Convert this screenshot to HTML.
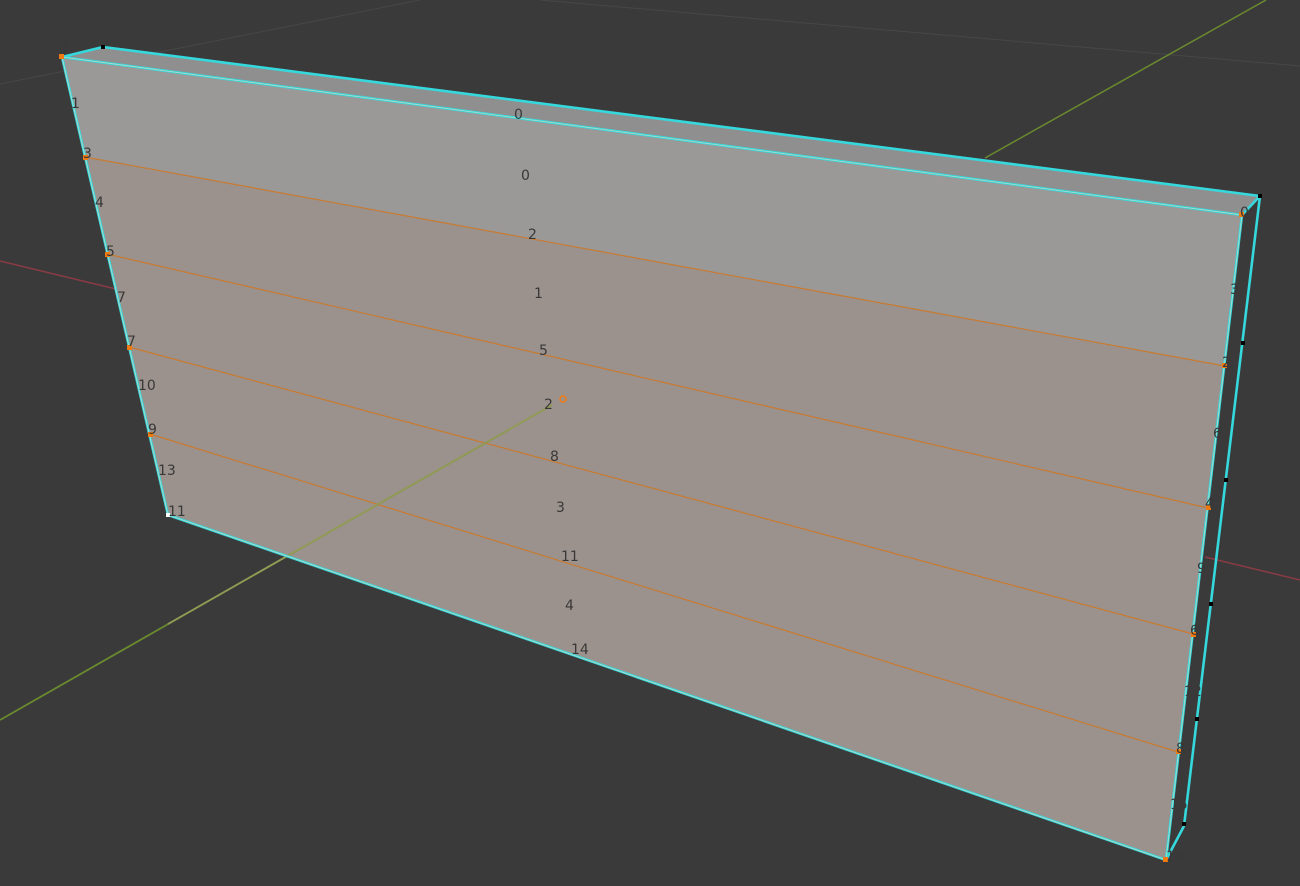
<!DOCTYPE html>
<html><head><meta charset="utf-8"><style>
html,body{margin:0;padding:0;background:#3a3a3a;overflow:hidden}
svg{display:block}
text{font-family:"DejaVu Sans","Liberation Sans",sans-serif;font-size:14px;fill:#383838}
</style></head><body>
<svg width="1300" height="886" viewBox="0 0 1300 886" xmlns="http://www.w3.org/2000/svg">
<rect width="1300" height="886" fill="#3a3a3a"/>
<line x1="0" y1="84" x2="420" y2="0" stroke="#474747" stroke-width="1"/>
<line x1="540" y1="0" x2="1300" y2="66" stroke="#474747" stroke-width="1"/>
<line x1="0" y1="261" x2="120" y2="290" stroke="#8a3a44" stroke-width="1.5"/>
<line x1="1205" y1="557" x2="1300" y2="580" stroke="#8a3a44" stroke-width="1.5"/>
<line x1="985" y1="158" x2="1266" y2="0" stroke="#6a8a2e" stroke-width="1.5"/>
<polygon points="62,57 103,47 1260,196 1242,215" fill="#8f8f8f"/>
<polygon points="62,57 1242,215 1166,860 168,515" fill="#9c928d"/>
<polygon points="62,57 1242,215 1225,366 85,157" fill="#9b9997"/>
<g stroke="#c87a30" stroke-width="1.2">
<line x1="85" y1="157" x2="1225" y2="366"/>
<line x1="107" y1="254" x2="1208" y2="508"/>
<line x1="129" y1="347" x2="1193" y2="634"/>
<line x1="150" y1="434" x2="1178" y2="752"/>
</g>
<line x1="0" y1="720" x2="552" y2="405" stroke="#6a8a2e" stroke-width="1.8"/>
<line x1="552" y1="405" x2="168" y2="624" stroke="#9ea060" stroke-width="1.8" opacity="0.8"/>
<g fill="none" stroke="#35d8dc" stroke-width="2.6" stroke-linejoin="round">
<polygon points="62,57 1242,215 1166,860 168,515"/>
<polyline points="62,57 103,47 1260,196 1242,215"/>
<polyline points="1260,196 1184,826 1166,860"/>
</g>
<g fill="none" stroke="#b8d8c8" stroke-width="0.8">
<polygon points="62,57 1242,215 1166,860 168,515"/>
</g>
<g fill="#f07a10">
<rect x="59" y="54" width="5" height="5"/><rect x="83" y="155" width="5" height="5"/>
<rect x="105" y="252" width="5" height="5"/><rect x="127" y="345" width="5" height="5"/>
<rect x="148" y="432" width="5" height="5"/><rect x="1239" y="212" width="5" height="5"/>
<rect x="1222" y="363" width="5" height="5"/><rect x="1206" y="505" width="5" height="5"/>
<rect x="1191" y="632" width="5" height="5"/><rect x="1176" y="749" width="5" height="5"/>
<rect x="1163" y="857" width="5" height="5"/>
</g>
<rect x="166" y="513" width="4" height="4" fill="#fff"/>
<g fill="#000">
<rect x="101" y="45" width="4" height="4"/><rect x="1258" y="194" width="4" height="4"/>
<rect x="1241" y="341" width="4" height="4"/><rect x="1224" y="478" width="4" height="4"/>
<rect x="1209" y="602" width="4" height="4"/><rect x="1195" y="717" width="4" height="4"/>
<rect x="1182" y="822" width="4" height="4"/>
</g>
<circle cx="563" cy="399" r="3" fill="none" stroke="#f07a10" stroke-width="1.5"/>
<text x="60" y="54">1</text><text x="71" y="108">1</text><text x="83" y="158">3</text>
<text x="95" y="207">4</text><text x="106" y="256">5</text><text x="117" y="302">7</text>
<text x="127" y="346">7</text><text x="138" y="390">10</text><text x="148" y="434">9</text>
<text x="158" y="475">13</text><text x="168" y="516">11</text>
<text x="514" y="119">0</text><text x="521" y="180">0</text><text x="528" y="239">2</text>
<text x="534" y="298">1</text><text x="539" y="355">5</text><text x="544" y="409">2</text>
<text x="550" y="461">8</text><text x="556" y="512">3</text><text x="561" y="561">11</text>
<text x="565" y="610">4</text><text x="571" y="654">14</text>
<text x="1240" y="217">0</text><text x="1230" y="294">3</text><text x="1222" y="367">2</text>
<text x="1213" y="438">6</text><text x="1205" y="508">4</text><text x="1197" y="573">9</text>
<text x="1190" y="635">6</text><text x="1184" y="696">12</text><text x="1176" y="753">8</text>
<text x="1170" y="809">15</text><text x="1166" y="861">10</text>
</svg>
</body></html>
